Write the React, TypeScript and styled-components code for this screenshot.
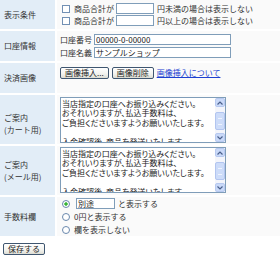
import React from 'react';
import styled, { createGlobalStyle } from 'styled-components';

const GlobalStyle = createGlobalStyle`
  html, body {
    margin: 0;
    padding: 0;
    background: #fff;
  }
  body {
    font-family: "Noto Sans CJK JP", "Noto Sans", sans-serif;
    font-size: 8px;
    line-height: 10px;
    color: #333;
  }
`;

const Form = styled.div`
  display: grid;
  grid-template-columns: 55px 1fr;
  gap: 2px;
`;

const Label = styled.div<{ $h: number; $shift?: number }>`
  height: ${(p) => p.$h}px;
  box-sizing: border-box;
  padding: ${(p) => p.$shift || 0}px 0 0 4px;
  background: #e2edf7;
  display: flex;
  flex-direction: column;
  justify-content: center;
  line-height: 12px;
`;

const Value = styled.div<{ $h: number; $top?: number }>`
  height: ${(p) => p.$h}px;
  box-sizing: border-box;
  padding: ${(p) => (p.$top !== undefined ? `${p.$top}px 0 0 3px` : '0 0 0 3px')};
  background: #fafafa;
  display: flex;
  flex-direction: column;
  justify-content: ${(p) => (p.$top !== undefined ? 'flex-start' : 'center')};
`;

const Line = styled.div<{ $h?: number }>`
  display: flex;
  align-items: center;
  height: ${(p) => p.$h || 12}px;
  white-space: nowrap;
`;

const Check = styled.input.attrs({ type: 'checkbox' })`
  appearance: none;
  width: 8px;
  height: 8px;
  margin: 0 4px 0 2px;
  border: 1px solid #7290b4;
  background: #fff;
  box-sizing: border-box;
`;

const Radio = styled.input.attrs({ type: 'radio' })`
  appearance: none;
  width: 8px;
  height: 8px;
  margin: 0 4px 0 2px;
  border: 1px solid #6a88ad;
  border-radius: 50%;
  box-sizing: border-box;
  background: #fff;
  &:checked {
    background: radial-gradient(circle, #36b336 0 1.4px, #fff 2px);
  }
`;

const Field = styled.input<{ $w: number }>`
  width: ${(p) => p.$w}px;
  height: 11px;
  box-sizing: border-box;
  margin: 0 3px 0 2px;
  padding: 0 1px;
  border: 1px solid #7f9db9;
  background: #fff;
  font: inherit;
  line-height: 9px;
  color: #222;
  outline: none;
`;

const Button = styled.button`
  height: 12px;
  box-sizing: border-box;
  margin: 0 3px 0 0;
  padding: 0 4px;
  border: 1px solid #3f5670;
  border-radius: 2px;
  background: linear-gradient(#ffffff, #f2f2ee 60%, #dcdcd4);
  font: inherit;
  line-height: 10px;
  color: #222;
`;

const Link = styled.a`
  color: #1b3fd0;
  text-decoration: underline;
`;

const MemoBox = styled.div`
  display: flex;
  width: 166px;
  height: 46px;
  box-sizing: border-box;
  border: 1px solid #7f9db9;
  background: #fff;
`;

// 本文は詰め組み（プロポーショナル）で表示
const Memo = styled.textarea`
  flex: 1;
  border: 0;
  margin: 0;
  padding: 1px 1px 0;
  outline: none;
  resize: none;
  overflow: hidden;
  background: transparent;
  font: inherit;
  font-feature-settings: "palt";
  line-height: 9.4px;
  color: #222;
  white-space: pre;
`;

const Scroll = styled.div`
  width: 10px;
  display: flex;
  flex-direction: column;
  background: #f3f5fb;
`;

const ScrollBtn = styled.div`
  height: 9px;
  box-sizing: border-box;
  border: 1px solid #b7c9f0;
  border-radius: 2px;
  background: #c9d9f8;
  display: flex;
  align-items: center;
  justify-content: center;
`;

const Thumb = styled.div`
  height: 18px;
  margin: 5px 0 3px;
  box-sizing: border-box;
  border: 1px solid #b2c5f0;
  border-radius: 2px;
  background: #cddcf9;
  display: flex;
  align-items: center;
  justify-content: center;
  &::after {
    content: '';
    width: 4px;
    height: 5px;
    border-top: 1px solid #eef3fe;
    border-bottom: 1px solid #eef3fe;
  }
`;

const Spacer = styled.div`
  flex: 1;
`;

const Footer = styled.div`
  padding: 7px 0 0 3px;
`;

const Chevron = ({ up }: { up?: boolean }) => (
  <svg width="6" height="4" viewBox="0 0 6 4">
    <path
      d={up ? 'M0.5 3.5 L3 1 L5.5 3.5' : 'M0.5 0.5 L3 3 L5.5 0.5'}
      fill="none"
      stroke="#4a5f8c"
      strokeWidth="1.2"
    />
  </svg>
);

const memoText =
  '当店指定の口座へお振り込みください。\nおそれいりますが、払込手数料は、\nご負担くださいますようお願いいたします。\n\n入金確認後、商品を発送いたします。';

const MemoField = () => (
  <MemoBox>
    <Memo defaultValue={memoText} />
    <Scroll>
      <ScrollBtn>
        <Chevron up />
      </ScrollBtn>
      <Thumb />
      <Spacer />
      <ScrollBtn>
        <Chevron />
      </ScrollBtn>
    </Scroll>
  </MemoBox>
);

const App = () => {
  return (
    <>
      <GlobalStyle />
      <Form>
        <Label $h={29}>表示条件</Label>
        <Value $h={29}>
          <Line>
            <Check />
            商品合計が
            <Field $w={38} />
            円未満の場合は表示しない
          </Line>
          <Line>
            <Check />
            商品合計が
            <Field $w={38} />
            円以上の場合は表示しない
          </Line>
        </Value>

        <Label $h={30}>口座情報</Label>
        <Value $h={30}>
          <Line $h={13}>
            口座番号
            <Field $w={137} defaultValue="00000-0-00000" />
          </Line>
          <Line $h={13}>
            口座名義
            <Field $w={137} defaultValue="サンプルショップ" />
          </Line>
        </Value>

        <Label $h={30}>決済画像</Label>
        <Value $h={30} $top={4}>
          <Line>
            <Button>画像挿入...</Button>
            <Button>画像削除</Button>
            <Link href="#">画像挿入について</Link>
          </Line>
        </Value>

        <Label $h={49} $shift={8}>
          <span>ご案内</span>
          <span>(カート用)</span>
        </Label>
        <Value $h={49} $top={2}>
          <MemoField />
        </Value>

        <Label $h={49}>
          <span>ご案内</span>
          <span>(メール用)</span>
        </Label>
        <Value $h={49} $top={1}>
          <MemoField />
        </Value>

        <Label $h={39}>手数料欄</Label>
        <Value $h={39}>
          <Line $h={13}>
            <Radio name="fee" defaultChecked />
            <Field $w={39} defaultValue="別途" />
            と表示する
          </Line>
          <Line $h={13}>
            <Radio name="fee" />
            0円と表示する
          </Line>
          <Line $h={13}>
            <Radio name="fee" />
            欄を表示しない
          </Line>
        </Value>
      </Form>
      <Footer>
        <Button>保存する</Button>
      </Footer>
    </>
  );
};

export default App;
